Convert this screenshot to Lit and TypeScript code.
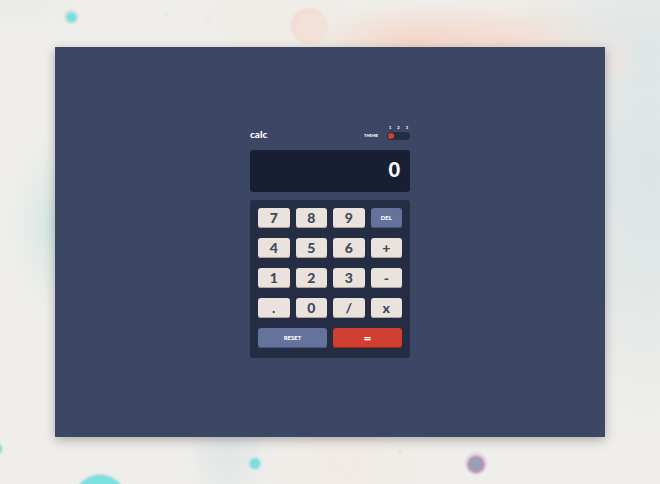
import { LitElement, html, css, svg } from "lit";
import { customElement, state } from "lit/decorators.js";
import { classMap } from "lit/directives/class-map.js";

const KEYS = [
  "7", "8", "9", "DEL",
  "4", "5", "6", "+",
  "1", "2", "3", "-",
  ".", "0", "/", "x",
  "RESET", "=",
];

@customElement("paint-backdrop")
class PaintBackdrop extends LitElement {
  static styles = css`
    :host {
      display: block;
      overflow: hidden;
    }
    .canvas {
      display: block;
      width: 100%;
      height: 100%;
    }
  `;

  render() {
    const wash = (x: number, y: number, rx: number, ry: number, id: string, opacity = 1) =>
      svg`<ellipse cx=${x} cy=${y} rx=${rx} ry=${ry} fill=${`url(#${id})`} opacity=${opacity} />`;
    return html`
      <svg class="canvas" viewBox="0 0 660 484" preserveAspectRatio="xMidYMid slice" aria-hidden="true">
        <defs>
          <radialGradient id="peach">
            <stop offset="0" stop-color="#f8d0bf" />
            <stop offset="0.4" stop-color="#f4d8cc" stop-opacity="0.75" />
            <stop offset="1" stop-color="#f0e2da" stop-opacity="0" />
          </radialGradient>
          <radialGradient id="mist">
            <stop offset="0" stop-color="#dce4e5" />
            <stop offset="0.5" stop-color="#dfe6e6" stop-opacity="0.7" />
            <stop offset="1" stop-color="#e6e9e8" stop-opacity="0" />
          </radialGradient>
          <radialGradient id="aqua">
            <stop offset="0" stop-color="#c8e3e1" />
            <stop offset="0.4" stop-color="#d7e7e6" stop-opacity="0.7" />
            <stop offset="1" stop-color="#e4ebea" stop-opacity="0" />
          </radialGradient>
          <radialGradient id="rose">
            <stop offset="0" stop-color="#f3e3dc" />
            <stop offset="1" stop-color="#f3e3dc" stop-opacity="0" />
          </radialGradient>
          <filter id="soft" x="-30%" y="-30%" width="160%" height="160%">
            <feGaussianBlur stdDeviation="1" />
          </filter>
        </defs>
        <rect width="660" height="484" fill="#efeeea" />
        ${wash(650, 170, 170, 270, "mist")}
        ${wash(640, 50, 150, 90, "mist", 0.5)}
        ${wash(55, 225, 50, 95, "aqua", 0.8)}
        ${wash(228, 452, 46, 60, "mist", 0.8)}
        ${wash(20, 5, 70, 25, "mist", 0.3)}
        ${wash(345, 465, 90, 60, "rose", 0.4)}
        ${wash(280, 15, 90, 40, "rose", 0.3)}
        ${wash(415, 42, 120, 44, "peach", 0.9)}
        ${wash(500, 42, 130, 48, "peach", 0.6)}
        ${wash(612, 62, 26, 26, "rose", 0.6)}
        <g filter="url(#soft)">
          <circle cx="309" cy="26" r="18" fill="#f3dcd3" />
          <circle cx="312" cy="28" r="16" fill="#f1e1d8" />
          <circle cx="71" cy="17" r="7" fill="#cfe0e2" />
          <circle cx="71.500" cy="17.500" r="5" fill="#78dede" />
          <circle cx="166" cy="14" r="2" fill="#e3e5e7" />
          <circle cx="208" cy="18" r="2" fill="#f3e2d9" />
          <circle cx="100" cy="501" r="27" fill="#c8dadc" />
          <circle cx="100" cy="501" r="26" fill="#7cdfe0" />
          <circle cx="255" cy="463.500" r="5.500" fill="#78dedf" />
          <circle cx="-5" cy="449" r="7" fill="#78dedf" />
          <circle cx="476" cy="463" r="11" fill="#dddbdc" />
          <circle cx="476" cy="464.500" r="9" fill="#b991b3" />
          <circle cx="475" cy="464" r="6" fill="#94a0b7" />
          <circle cx="400" cy="452" r="2" fill="#dedddb" />
        </g>
      </svg>
    `;
  }
}

@customElement("app-root")
class AppRoot extends LitElement {
  @state() private entry = "0";
  @state() private theme = 1;
  private stored: number | null = null;
  private operator = "";
  private fresh = true;

  static styles = css`
    :host {
      display: flex;
      position: relative;
      box-sizing: border-box;
      min-height: 100vh;
      padding: 47px 55px;
      font-family: Lato, "Liberation Sans", sans-serif;
      font-weight: 900;
      color: #ffffff;
    }
    .backdrop {
      position: absolute;
      inset: 0;
    }
    .stage {
      position: relative;
      flex: 1;
      display: flex;
      align-items: center;
      justify-content: center;
      padding-bottom: 2px;
      background: #3c4665;
      box-shadow: 0 3px 10px rgba(60, 50, 45, 0.35);
    }
    .calculator {
      width: 160px;
      display: flex;
      flex-direction: column;
      gap: 8px;
    }
    .header {
      display: flex;
      align-items: flex-end;
      justify-content: space-between;
      padding-bottom: 2px;
    }
    .title {
      margin: 0;
      font-size: 10px;
      line-height: 12px;
      font-weight: 900;
    }
    .theme {
      display: flex;
      align-items: flex-end;
      gap: 9px;
    }
    .theme-label {
      font-size: 4px;
      line-height: 8px;
    }
    .switch {
      width: 23px;
    }
    .marks {
      display: flex;
      justify-content: space-between;
      padding: 0 2px;
      font-size: 4px;
      line-height: 8px;
    }
    .slider {
      appearance: none;
      display: block;
      box-sizing: border-box;
      width: 100%;
      height: 8px;
      margin: 0;
      padding: 0 1px;
      border-radius: 4px;
      background: #252d44;
      cursor: pointer;
    }
    .slider::-webkit-slider-thumb {
      appearance: none;
      width: 6px;
      height: 6px;
      border-radius: 50%;
      background: #d8402c;
    }
    .display {
      display: block;
      box-sizing: border-box;
      height: 42px;
      padding: 0 10px;
      overflow: hidden;
      border-radius: 3px;
      background: #191f33;
      font-size: 20px;
      line-height: 38px;
      text-align: right;
    }
    .keypad {
      display: grid;
      grid-template-columns: repeat(4, 1fr);
      grid-auto-rows: 20px;
      gap: 10px 6px;
      padding: 8px 8px 10px;
      border-radius: 3px;
      background: #252d44;
    }
    .key {
      min-width: 0;
      padding: 0;
      border: 0;
      border-radius: 3px;
      background: #e9e2dd;
      box-shadow: inset 0 -1px #b3a497;
      color: #434958;
      font-family: inherit;
      font-size: 14px;
      font-weight: 900;
      line-height: 20px;
      cursor: pointer;
    }
    .action {
      background: #65729b;
      box-shadow: inset 0 -1px #47547f;
      color: #ffffff;
      font-size: 6px;
    }
    .equals {
      background: #d03f2f;
      box-shadow: inset 0 -1px #97281b;
      color: #ffffff;
      line-height: 16px;
    }
    .wide {
      grid-column: span 2;
    }
  `;

  private compute(a: number, b: number): number {
    switch (this.operator) {
      case "+": return a + b;
      case "-": return a - b;
      case "x": return a * b;
      default: return a / b;
    }
  }

  private press(key: string) {
    if (key === "RESET") {
      this.entry = "0";
      this.stored = null;
      this.operator = "";
      this.fresh = true;
    } else if (key === "DEL") {
      this.entry = this.entry.slice(0, -1) || "0";
    } else if (/^[0-9.]$/.test(key)) {
      if (this.fresh || (this.entry === "0" && key !== ".")) {
        this.entry = key === "." ? "0." : key;
      } else if (key !== "." || !this.entry.includes(".")) {
        this.entry += key;
      }
      this.fresh = false;
    } else {
      if (this.operator && this.stored !== null && !this.fresh) {
        this.entry = String(this.compute(this.stored, Number(this.entry)));
      }
      this.stored = Number(this.entry);
      this.operator = key === "=" ? "" : key;
      this.fresh = true;
    }
  }

  render() {
    return html`
      <paint-backdrop class="backdrop"></paint-backdrop>
      <main class="stage">
        <section class="calculator">
          <header class="header">
            <h1 class="title">calc</h1>
            <div class="theme">
              <label class="theme-label" for="theme">THEME</label>
              <div class="switch">
                <div class="marks"><span>1</span><span>2</span><span>3</span></div>
                <input
                  class="slider"
                  id="theme"
                  type="range"
                  min="1"
                  max="3"
                  .value=${String(this.theme)}
                  @input=${(e: Event) => (this.theme = Number((e.target as HTMLInputElement).value))}
                />
              </div>
            </div>
          </header>
          <output class="display">${this.entry}</output>
          <div class="keypad">
            ${KEYS.map((key) => html`
              <button
                type="button"
                class=${classMap({
                  key: true,
                  action: key === "DEL" || key === "RESET",
                  equals: key === "=",
                  wide: key === "RESET" || key === "=",
                })}
                @click=${() => this.press(key)}
              >${key}</button>
            `)}
          </div>
        </section>
      </main>
    `;
  }
}
